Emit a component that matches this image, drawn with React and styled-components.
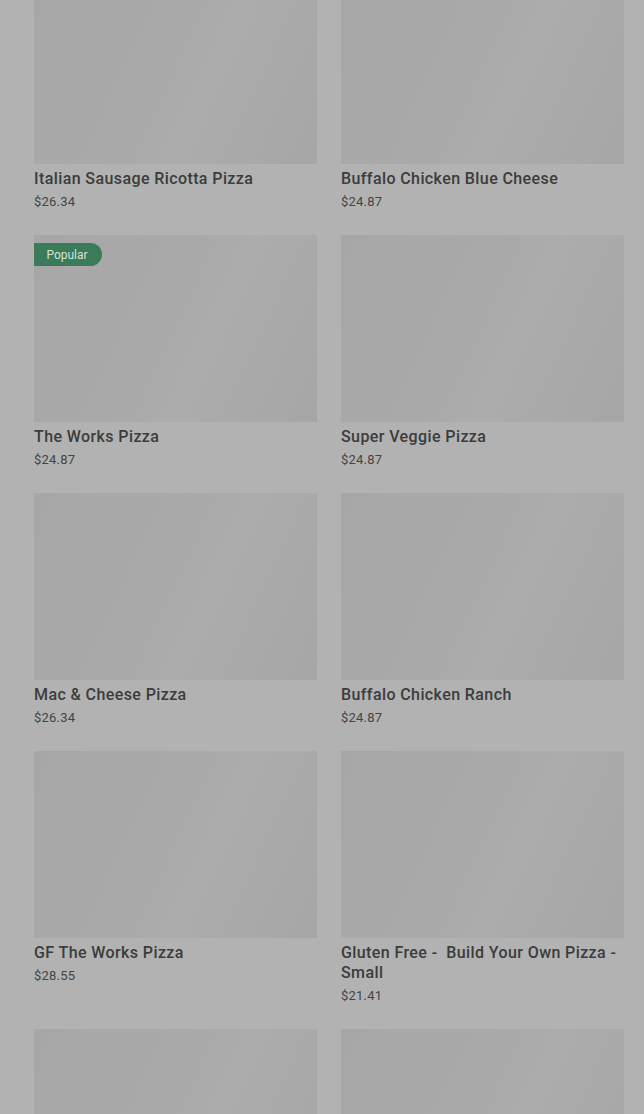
import styled, { createGlobalStyle } from "styled-components";

const items = [
    { name: "Italian Sausage Ricotta Pizza", price: "$26.34" },
    { name: "Buffalo Chicken Blue Cheese", price: "$24.87" },
    { name: "The Works Pizza", price: "$24.87", badge: "Popular" },
    { name: "Super Veggie Pizza", price: "$24.87" },
    { name: "Mac & Cheese Pizza", price: "$26.34" },
    { name: "Buffalo Chicken Ranch", price: "$24.87" },
    { name: "GF The Works Pizza", price: "$28.55" },
    { name: "Gluten Free -  Build Your Own Pizza - Small", price: "$21.41" },
    { name: "", price: "" },
    { name: "", price: "" },
]

function App () {
    return (
        <>
            <GlobalStyle />
            <Page>
                <Grid>
                    {items.map((item, i) => (
                        <Card key={i}>
                            <Photo>
                                {item.badge && <Badge>{item.badge}</Badge>}
                            </Photo>
                            {item.name && <Title>{item.name}</Title>}
                            {item.price && <Price>{item.price}</Price>}
                        </Card>
                    ))}
                </Grid>
            </Page>
        </>
    )
}

const GlobalStyle = createGlobalStyle`
    html, body {
        margin: 0;
        padding: 0;
        background: #b2b2b2;
        font-family: Roboto, "Liberation Sans", sans-serif;
    }
`

const Page = styled.div`
    height: 1114px;
    overflow: hidden;
    background: #b2b2b2;
    padding: 0 20px 0 34px;
`

const Grid = styled.div`
    display: grid;
    grid-template-columns: 283px 283px;
    column-gap: 24px;
    row-gap: 24px;
    margin-top: -23px;
`

const Card = styled.div`
    display: flex;
    flex-direction: column;
`

const Photo = styled.div`
    position: relative;
    height: 187px;
    background: linear-gradient(115deg, #a7a7a7 0%, #a9a9a9 45%, #acacac 60%, #a6a6a6 100%);
`

const Badge = styled.div`
    position: absolute;
    top: 8px;
    left: 0;
    height: 23px;
    width: 68px;
    display: flex;
    align-items: center;
    justify-content: center;
    box-sizing: border-box;
    padding-right: 2px;
    background: #3b7b5a;
    border-radius: 0 12px 12px 0;
    color: #d3e1d8;
    font-size: 12px;
`

const Title = styled.p`
    margin: 5px 0 0;
    font-size: 16px;
    font-weight: 500;
    letter-spacing: 0.4px;
    line-height: 20px;
    white-space: pre-wrap;
    color: #3c3c3c;
`

const Price = styled.p`
    margin: 4px 0 0;
    font-size: 13px;
    letter-spacing: 0.2px;
    line-height: 18px;
    color: #444444;
`

export default App;
